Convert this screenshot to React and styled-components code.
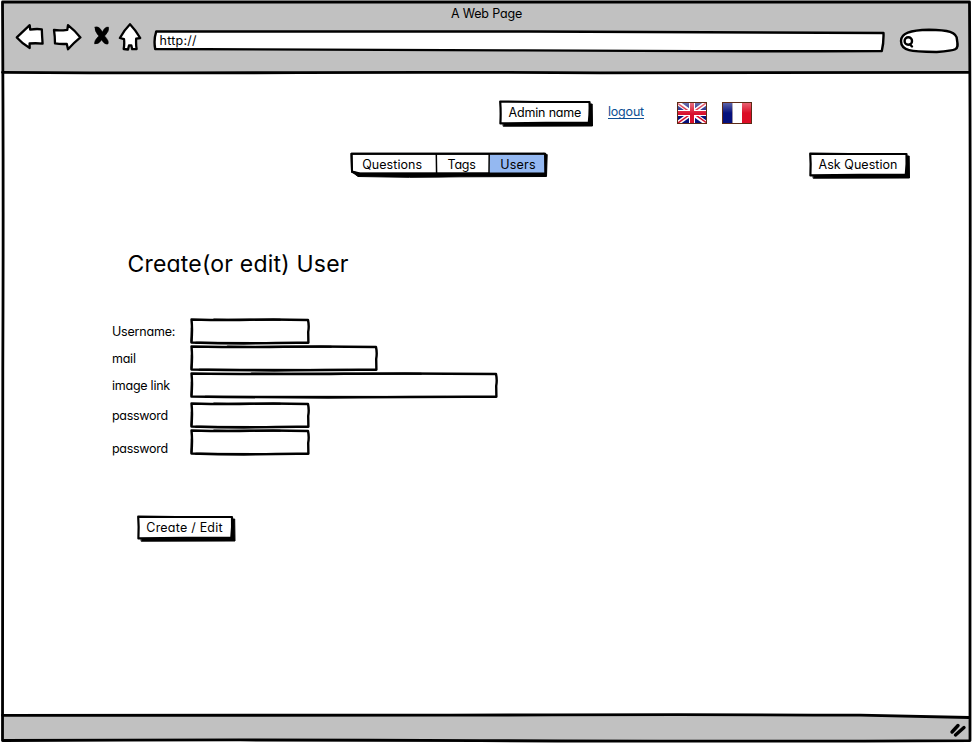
import React from "react";
import styled, { createGlobalStyle } from "styled-components";

const GlobalStyle = createGlobalStyle`
  * { box-sizing: border-box; }
  body { margin: 0; background: #fff; }
  button, input { font: inherit; font-feature-settings: inherit; color: inherit; background: none; border: 0; padding: 0; margin: 0; }
`;

const Window = styled.div`
  position: relative;
  width: 972px;
  height: 743px;
  padding: 2px 2px 2px 3px;
  display: flex;
  flex-direction: column;
  background: #fff;
  color: #000;
  overflow: hidden;
  font-family: Inter, "Open Sans", sans-serif;
  font-size: 12.5px;
  font-weight: 420;
  line-height: 16px;
  font-feature-settings: "cv11" 1;
`;

/* Hand-drawn ink laid over the element it outlines */
const Ink = styled.svg`
  position: absolute;
  inset: 0;
  width: 100%;
  height: 100%;
  overflow: visible;
  pointer-events: none;
  fill: none;
  stroke: #000;
  stroke-width: ${(p) => p.$weight || 2.4};
  stroke-linejoin: round;
  stroke-linecap: round;
`;

const Label = styled.span`
  position: relative;
  white-space: pre;
  letter-spacing: ${(p) => p.$track || 0}px;
`;

const Chrome = styled.header`
  height: 71px;
  padding-top: 4px;
  background: #c1c1c1;
`;

const PageTitle = styled.div`
  text-align: center;
  letter-spacing: -0.17px;
`;

const Toolbar = styled.div`
  display: grid;
  grid-template-columns: 37px 40px 26px 35px 746px 61px;
  align-items: start;
  margin-top: 1px;
  padding-left: 12px;
`;

const ToolButton = styled.button`
  display: block;
  width: ${(p) => p.$width}px;
  height: 28px;

  svg {
    display: block;
    fill: #fff;
    stroke: #000;
    stroke-width: 2.3;
    stroke-linejoin: round;
    stroke-linecap: round;
  }
`;

const AddressBar = styled.div`
  position: relative;
  width: 733px;
  height: 25px;
  margin-top: 6px;
  padding: 4px 0 0 6.5px;
`;

const SearchBox = styled.div`
  position: relative;
  width: 61px;
  height: 26px;
  margin-top: 5px;
`;

const Main = styled.main`
  flex: 1;
`;

const AccountRow = styled.div`
  display: grid;
  grid-template-columns: 108px 70px 45px 30px;
  align-items: start;
  height: 52px;
  margin-top: 27px;
  padding-left: 496px;
`;

const NavRow = styled.nav`
  display: grid;
  grid-template-columns: 459px 101px;
  align-items: start;
  padding-left: 347px;
`;

const ButtonBox = styled.button`
  position: relative;
  display: block;
  width: ${(p) => p.$width}px;
  height: 27px;
  padding: 5px 0 6px ${(p) => p.$inset}px;
  text-align: left;
`;

const LogoutLink = styled.a`
  justify-self: start;
  height: 17px;
  margin: 4px 0 0 1px;
  color: #0d4f94;
  letter-spacing: -0.2px;
  background: linear-gradient(#0d4f94, #0d4f94) 0 14px / 100% 1px no-repeat;
`;

const Flag = styled.svg`
  display: block;
  width: 30px;
  height: 22px;
  margin-top: 2px;
`;

const Tabs = styled.div`
  position: relative;
  display: grid;
  grid-template-columns: 86px 53px 58px;
  width: 198px;
  height: 26px;
`;

const Tab = styled.button`
  height: 26px;
  padding: 0 0 0 ${(p) => p.$inset}px;
  text-align: left;
`;

const Heading = styled.h1`
  margin: 71px 0 0 124.5px;
  font-size: 23px;
  font-weight: 400;
  line-height: 28px;
  letter-spacing: 0.2px;
`;

const Form = styled.form`
  margin-top: 40px;
  padding-left: 108px;
`;

const FieldRow = styled.label`
  display: grid;
  grid-template-columns: 79px auto;
  justify-content: start;
  align-items: start;
  height: 27px;
  margin-top: ${(p) => p.$gap || 0}px;
`;

const FieldName = styled.span`
  padding: ${(p) => p.$drop || 6}px 0 0 1px;
  letter-spacing: ${(p) => p.$track}px;
  white-space: pre;
`;

const FieldBox = styled.span`
  position: relative;
  display: block;
  width: ${(p) => p.$width}px;
  height: 27px;
`;

const FieldInput = styled.input`
  position: relative;
  display: block;
  width: 100%;
  height: 100%;
  padding: 0 8px;
  outline: 0;
`;

const Actions = styled.div`
  margin-top: 59px;
  padding-left: 25.5px;
`;

const StatusBar = styled.footer`
  height: 26px;
  background: #c1c1c1;
`;

function SketchButton({ width, inset, track, children }) {
  const w = width;
  return (
    <ButtonBox type="button" $width={w} $inset={inset}>
      <Ink $weight={2.2}>
        <path d={`M4.5 4 H${w - 0.8} L${w - 0.5} 26 L4.5 26.2 Z`} fill="#000" stroke="#000" strokeWidth="1" />
        <path d={`M1.2 1.6 L${w * 0.4} 2 L${w - 3.5} 2 Q${w - 3} 12 ${w - 4.2} 22.8 L${w * 0.5} 22.8 L1.4 23.4 Q2 12 1.2 1.6 Z`} fill="#fff" />
      </Ink>
      <Label $track={track}>{children}</Label>
    </ButtonBox>
  );
}

function Field({ name, width, gap, drop, track, type = "text" }) {
  const w = width;
  return (
    <FieldRow $gap={gap}>
      <FieldName $drop={drop} $track={track}>{name}</FieldName>
      <FieldBox $width={w}>
        <Ink $weight={2.4}>
          <path
            d={`M1.5 1.5 Q${w * 0.3} 2.6 ${w * 0.5} 1.8 T${w - 2} 2 Q${w - 0.7} 8 ${w - 1.8} 14 L${w - 1.6} 24.8 Q${w * 0.75} 24.6 ${w * 0.55} 25.4 Q${w * 0.3} 25.7 1.4 24.5 Q2.6 12 1.5 1.5 Z`}
            fill="#fff"
          />
          <path d={`M${w * 0.2} 1.6 L${w * 0.75} 1.7 M${w * 0.05} 24.8 L${w * 0.9} 25 M1.8 10 L1.5 23`} strokeWidth="2" />
        </Ink>
        <FieldInput type={type} aria-label={name} />
      </FieldBox>
    </FieldRow>
  );
}

function UkFlag() {
  return (
    <Flag viewBox="0 0 30 22" aria-label="English">
      <defs>
        <linearGradient id="ukGloss" x1="0" y1="0" x2="0" y2="1">
          <stop offset="0" stopColor="#fff" stopOpacity="0.4" />
          <stop offset="0.55" stopColor="#fff" stopOpacity="0" />
        </linearGradient>
        <clipPath id="ukClip"><rect x="1" y="1" width="28" height="20" /></clipPath>
      </defs>
      <rect width="30" height="22" fill="#5c2a16" />
      <g clipPath="url(#ukClip)">
        <rect x="1" y="1" width="28" height="20" fill="#06107a" />
        <path d="M1 1 L29 21 M29 1 L1 21" stroke="#fff" strokeWidth="4.4" />
        <path d="M1 1.6 L15 11.6 M15 11 L29 1 M15 10.4 L29 20.4 M15 11 L1 21" stroke="#d80f2c" strokeWidth="1.5" />
        <path d="M15 1 V21 M1 11 H29" stroke="#fff" strokeWidth="6" />
        <path d="M15 1 V21 M1 11 H29" stroke="#d80f2c" strokeWidth="4" />
        <rect x="1" y="1" width="28" height="20" fill="url(#ukGloss)" />
      </g>
    </Flag>
  );
}

function FrenchFlag() {
  return (
    <Flag viewBox="0 0 30 22" aria-label="Français">
      <defs>
        <linearGradient id="frGloss" x1="0" y1="0" x2="0" y2="1">
          <stop offset="0" stopColor="#fff" stopOpacity="0.35" />
          <stop offset="0.5" stopColor="#fff" stopOpacity="0" />
        </linearGradient>
      </defs>
      <rect width="30" height="22" fill="#5c2a16" />
      <rect x="1" y="1" width="9.5" height="20" fill="#05107c" />
      <rect x="10.5" y="1" width="9.5" height="20" fill="#fff" />
      <rect x="20" y="1" width="9" height="20" fill="#dc0d26" />
      <rect x="1" y="1" width="28" height="20" fill="url(#frGloss)" />
    </Flag>
  );
}

export default function App() {
  return (
    <Window>
      <GlobalStyle />
      <Chrome>
        <PageTitle>A Web Page</PageTitle>
        <Toolbar>
          <ToolButton type="button" aria-label="Back" $width={30}>
            <svg width="30" height="28" viewBox="15 23 30 28">
              <path d="M16.8 37.4 L29.7 25.2 L30.2 29.6 Q36 28.6 41.8 29.3 Q42 36 42.6 43.6 Q36 43 29.6 43.5 L29.7 48 Q22.5 43.8 16.8 37.4 Z" />
            </svg>
          </ToolButton>
          <ToolButton type="button" aria-label="Forward" $width={30}>
            <svg width="30" height="28" viewBox="52 23 30 28">
              <path d="M54 30 Q60 30.8 67.3 29.8 L68 25.2 Q74.5 30.3 80.4 37.4 Q73.5 43 68 49.3 L66.8 43.9 Q61 44.3 55 43.4 Q55 36.5 54 30 Z" />
            </svg>
          </ToolButton>
          <ToolButton type="button" aria-label="Stop" $width={18}>
            <svg width="18" height="28" viewBox="92 23 18 28">
              <path d="M95 27.2 Q99 25.5 102.4 32 Q105 26.3 108.6 27.2 Q109.6 31 104.6 36 Q109.4 41 108 44 Q104.5 45 101.6 40 Q98.500 44.600 94.500 43.800 Q94 40.500 98.800 36 Q94.200 31 95 27.200 Z" fill="#000" strokeWidth="0.5" />
            </svg>
          </ToolButton>
          <ToolButton type="button" aria-label="Home" $width={24}>
            <svg width="24" height="28" viewBox="118 23 24 28">
              <path d="M130 24.2 Q136 30.5 140.2 38 L136.2 38.7 Q135.8 44 136.6 49 L132.2 49.2 L131.3 45.3 L129 45.4 L128 49.5 L123.7 49 Q124.6 44 124 39.2 L119.9 38 Q124 30.2 130 24.2 Z" />
            </svg>
          </ToolButton>
          <AddressBar>
            <Ink>
              <path d="M3.2 2.5 Q190 1.8 375 2.5 T730.5 4 Q730.8 14 728.8 22 Q540 22.6 370 21.4 T2.2 20 Q0.5 11 3.2 2.5 Z" fill="#fff" />
            </Ink>
            <Label $track={0.25}>http://</Label>
          </AddressBar>
          <SearchBox>
            <Ink>
              <path d="M2 13 C2 5 11 2.3 30 1.8 C49 2 58 4 58 12 C60 22.5 58 22.5 37 24 C12 23.5 2 23 2 13 Z" fill="#fff" />
              <circle cx="9.300" cy="13" r="3.700" />
              <path d="M11 16.500 L13 18.500" />
            </Ink>
          </SearchBox>
        </Toolbar>
      </Chrome>

      <Main>
        <AccountRow>
          <SketchButton width={94} inset={9.5} track={-0.17}>Admin name</SketchButton>
          <LogoutLink>logout</LogoutLink>
          <UkFlag />
          <FrenchFlag />
        </AccountRow>

        <NavRow>
          <Tabs>
            <Ink $weight={2}>
              <path d="M2 20 L8 24.5 Q60 26 110 24.8 L196.5 24.5 L197.2 2.5 L194 1.5 Z" fill="#000" strokeWidth="1" />
              <path d="M1.5 1.8 L195 1.8 L195 21.5 L10 21.5 L2 19.5 Z" fill="#fff" />
              <path d="M139.5 2.5 L194.5 2.7 L194.5 21 L139.5 21 Z" fill="#94b8f1" stroke="none" />
              <path d="M86.3 2 L86.6 22 M139.2 2 L139 22" strokeWidth="1.5" />
              <path d="M1.5 1.8 L195 1.8 L195.5 21.3 L9 21.8 L2 20 Z" />
            </Ink>
            <Tab type="button" $inset={12.2}><Label $track={0.06}>Questions</Label></Tab>
            <Tab type="button" $inset={11.5}><Label $track={-0.2}>Tags</Label></Tab>
            <Tab type="button" $inset={11.3}><Label $track={0.2}>Users</Label></Tab>
          </Tabs>
          <SketchButton width={101} inset={9.5} track={0.05}>Ask Question</SketchButton>
        </NavRow>

        <Heading>Create(or edit) User</Heading>

        <Form>
          <Field name="Username:" width={120} track={-0.2} />
          <Field name="mail" width={188} track={-0.25} />
          <Field name="image link" width={308} track={-0.25} />
          <Field name="password" width={120} gap={3} track={-0.3} type="password" />
          <Field name="password" width={120} drop={12} track={-0.3} type="password" />
          <Actions>
            <SketchButton width={98.5} inset={9.8} track={0.22}>Create / Edit</SketchButton>
          </Actions>
        </Form>
      </Main>

      <StatusBar />

      <Ink viewBox="0 0 972 743" $weight={2.8}>
        <path d="M970 718 L900 715.8 V714 H971 V718 Z" fill="#fff" stroke="none" />
        <path d="M2.5 2 L969.5 2 Q970.6 180 970 370 T970 740.6 Q700 741.8 480 740.6 T2.5 740.5 Q2 560 2.8 370 T2.5 2 Z" />
        <path d="M2.5 72.3 Q150 73.3 300 72.6 T600 72.9 L969 72.3" />
        <path d="M2.5 715.3 Q200 716.2 450 715.2 T860 715.2 L969 717.5" />
        <path d="M958 725.5 L952 732 M964 727.5 L955.5 735" strokeWidth="3.4" />
      </Ink>
    </Window>
  );
}
